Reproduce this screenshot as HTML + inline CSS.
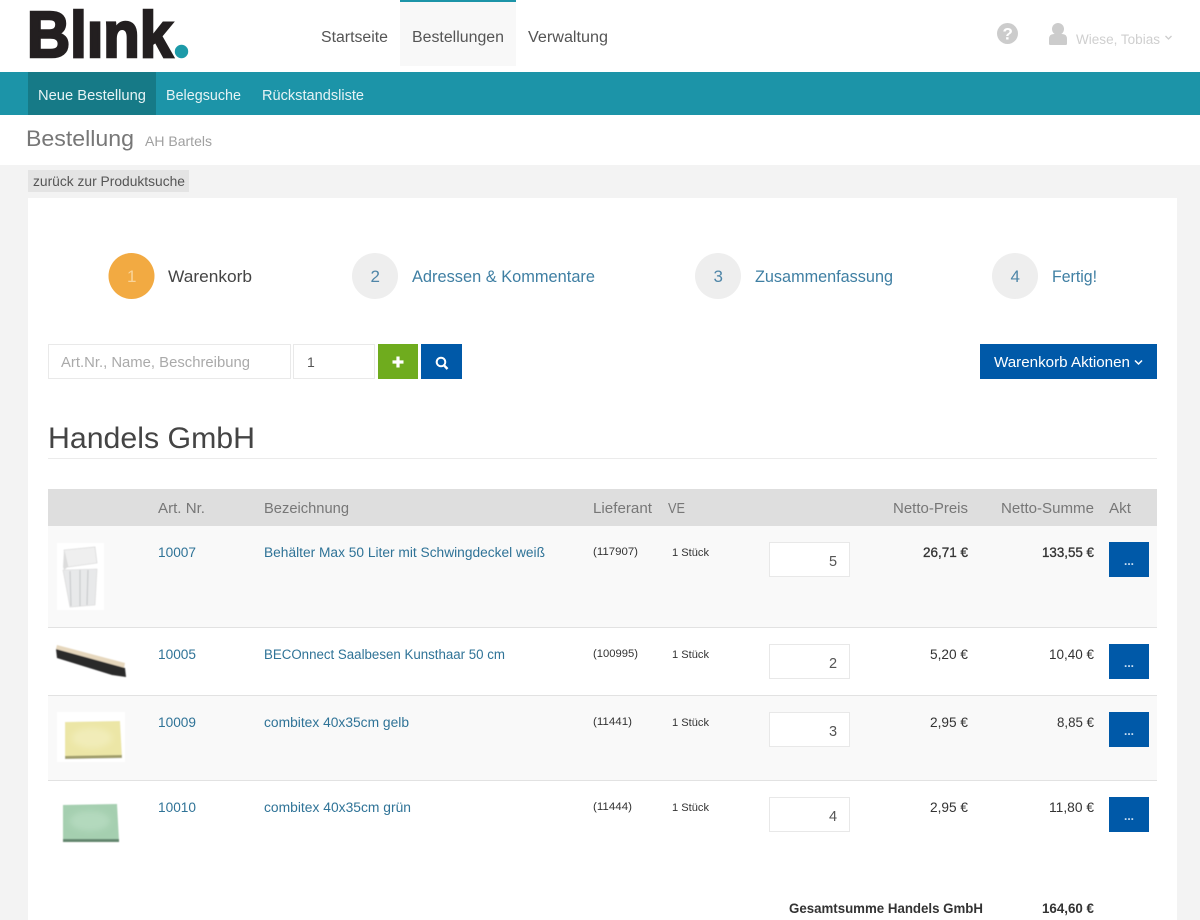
<!DOCTYPE html>
<html lang="de"><head><meta charset="utf-8"><title>Blink Bestellung</title>
<style>
html,body{margin:0;padding:0;background:#fff}
#p{position:relative;width:1200px;height:920px;overflow:hidden;background:#f3f3f3;font-family:"Liberation Sans",sans-serif}
#p div{position:absolute}
svg{position:absolute;left:0;top:0;filter:blur(.3px)}
text{font-family:"Liberation Sans",sans-serif}
</style></head><body>
<div id="p">
<div style="left:0;top:0;width:1200px;height:165px;background:#fff"></div>
<div style="left:400px;top:0;width:116px;height:66px;background:#f8f8f8;border-top:2px solid #1c94a8;box-sizing:border-box"></div>
<div style="left:0;top:72px;width:1200px;height:43px;background:#1c94a8"></div>
<div style="left:28px;top:72px;width:128px;height:43px;background:#167a87"></div>
<div style="left:28px;top:170px;width:161px;height:22px;background:#e4e4e4"></div>
<div style="left:28px;top:198px;width:1149px;height:722px;background:#fff"></div>
<div style="left:48px;top:344px;width:243px;height:35px;box-sizing:border-box;background:#fff;border:1px solid #e9e9e9"></div>
<div style="left:293px;top:344px;width:82px;height:35px;box-sizing:border-box;background:#fff;border:1px solid #e9e9e9"></div>
<div style="left:378px;top:344px;width:40px;height:35px;background:#6fac1e"></div>
<div style="left:421px;top:344px;width:41px;height:35px;background:#0059a8"></div>
<div style="left:980px;top:344px;width:177px;height:35px;background:#0059a8"></div>
<div style="left:48px;top:458px;width:1109px;height:1px;background:#ebebeb"></div>
<div style="left:48px;top:489px;width:1109px;height:37px;background:#dedede"></div>
<div style="left:48px;top:526px;width:1109px;height:102px;background:#f9f9f9;border-bottom:1px solid #e2e2e2;box-sizing:border-box"></div>
<div style="left:48px;top:628px;width:1109px;height:68px;background:#fff;border-bottom:1px solid #e2e2e2;box-sizing:border-box"></div>
<div style="left:48px;top:696px;width:1109px;height:85px;background:#f9f9f9;border-bottom:1px solid #e2e2e2;box-sizing:border-box"></div>
<div style="left:769px;top:542px;width:81px;height:35px;box-sizing:border-box;background:#fff;border:1px solid #e8e8e8"></div>
<div style="left:769px;top:644px;width:81px;height:35px;box-sizing:border-box;background:#fff;border:1px solid #e8e8e8"></div>
<div style="left:769px;top:712px;width:81px;height:35px;box-sizing:border-box;background:#fff;border:1px solid #e8e8e8"></div>
<div style="left:769px;top:797px;width:81px;height:35px;box-sizing:border-box;background:#fff;border:1px solid #e8e8e8"></div>
<div style="left:1109px;top:542px;width:40px;height:35px;background:#0059a8"></div>
<div style="left:1109px;top:644px;width:40px;height:35px;background:#0059a8"></div>
<div style="left:1109px;top:712px;width:40px;height:35px;background:#0059a8"></div>
<div style="left:1109px;top:797px;width:40px;height:35px;background:#0059a8"></div>

<svg width="1200" height="920" viewBox="0 0 1200 920">
<defs><filter id="b" x="-10%" y="-10%" width="120%" height="120%"><feGaussianBlur stdDeviation="0.6"/></filter>
<filter id="c" x="-30%" y="-30%" width="160%" height="160%"><feGaussianBlur stdDeviation="3"/></filter></defs>
<!-- logo -->
<text x="27" y="57" font-size="65" font-weight="700" fill="#231f20" stroke="#231f20" stroke-width="2.600" textLength="146" lengthAdjust="spacingAndGlyphs">Blınk</text>
<circle cx="181.500" cy="51.500" r="6.700" fill="#1c9aa8"/>
<!-- top right icons -->
<circle cx="1007.500" cy="33.500" r="10.500" fill="#ccc"/>
<text x="1002.500" y="39.500" font-size="17" font-weight="700" fill="#fff">?</text>
<circle cx="1058" cy="29" r="6" fill="#ccc"/>
<path d="M1049 44v-5q0-5 5-5h8q5 0 5 5v5q0 1-2 1h-14q-2 0-2-1z" fill="#ccc"/>
<path d="M1165.500 36l3 3 3-3" fill="none" stroke="#ccc" stroke-width="1.300"/>

<g font-size="15.500" fill="#555">
<text x="321" y="42" textLength="67" lengthAdjust="spacingAndGlyphs">Startseite</text>
<text x="412" y="42" textLength="92" lengthAdjust="spacingAndGlyphs">Bestellungen</text>
<text x="528" y="42" textLength="80" lengthAdjust="spacingAndGlyphs">Verwaltung</text>
</g>
<text x="1076" y="44" font-size="13.500" fill="#cfcfcf" textLength="84" lengthAdjust="spacingAndGlyphs">Wiese, Tobias</text>
<g font-size="14.500" fill="#e6f3f5">
<text x="38" y="100" textLength="108" lengthAdjust="spacingAndGlyphs">Neue Bestellung</text>
<text x="166" y="100" textLength="75" lengthAdjust="spacingAndGlyphs">Belegsuche</text>
<text x="262" y="100" textLength="102" lengthAdjust="spacingAndGlyphs">Rückstandsliste</text>
</g>
<text x="26" y="146" font-size="22.500" fill="#777" textLength="108" lengthAdjust="spacingAndGlyphs">Bestellung</text>
<text x="145" y="146" font-size="14" fill="#a0a0a0" textLength="67" lengthAdjust="spacingAndGlyphs">AH Bartels</text>
<text x="33" y="186" font-size="13.500" fill="#555" textLength="152" lengthAdjust="spacingAndGlyphs">zurück zur Produktsuche</text>

<!-- steps -->
<circle cx="131.500" cy="276" r="23" fill="#f2aa42"/>
<circle cx="375" cy="276" r="23" fill="#eeeeee"/>
<circle cx="718" cy="276" r="23" fill="#eeeeee"/>
<circle cx="1015" cy="276" r="23" fill="#eeeeee"/>
<text x="127" y="282" font-size="17" fill="#f9d49a">1</text>
<g font-size="17" fill="#4f86a8">
<text x="370.500" y="282">2</text>
<text x="713.500" y="282">3</text>
<text x="1010.500" y="282">4</text>
</g>
<text x="168" y="282" font-size="16.500" fill="#444" textLength="84" lengthAdjust="spacingAndGlyphs">Warenkorb</text>
<g font-size="16.500" fill="#3f7fa3">
<text x="412" y="282" textLength="183" lengthAdjust="spacingAndGlyphs">Adressen &amp; Kommentare</text>
<text x="755" y="282" textLength="138" lengthAdjust="spacingAndGlyphs">Zusammenfassung</text>
<text x="1052" y="282" textLength="45" lengthAdjust="spacingAndGlyphs">Fertig!</text>
</g>

<!-- search -->
<text x="61" y="367" font-size="15" fill="#aaa" textLength="189" lengthAdjust="spacingAndGlyphs">Art.Nr., Name, Beschreibung</text>
<text x="307" y="367" font-size="14" fill="#555">1</text>
<path d="M398 356.500v11M392.500 362h11" stroke="#fff" stroke-width="3.200"/>
<circle cx="441" cy="362" r="4.300" fill="none" stroke="#fff" stroke-width="2"/>
<path d="M444 365.300l3.500 3.700" stroke="#fff" stroke-width="2.400"/>
<text x="994" y="367" font-size="14.500" fill="#fff" textLength="136" lengthAdjust="spacingAndGlyphs">Warenkorb Aktionen</text>
<path d="M1135 360.500l3.500 3.500 3.500-3.500" fill="none" stroke="#fff" stroke-width="1.500"/>

<text x="48" y="448" font-size="30" fill="#444" textLength="207" lengthAdjust="spacingAndGlyphs">Handels GmbH</text>

<!-- table header -->
<g font-size="14.500" fill="#777">
<text x="158" y="513" textLength="47" lengthAdjust="spacingAndGlyphs">Art. Nr.</text>
<text x="264" y="513" textLength="85" lengthAdjust="spacingAndGlyphs">Bezeichnung</text>
<text x="593" y="513" textLength="59" lengthAdjust="spacingAndGlyphs">Lieferant</text>
<text x="668" y="513" textLength="17" lengthAdjust="spacingAndGlyphs">VE</text>
<text x="893" y="513" textLength="75" lengthAdjust="spacingAndGlyphs">Netto-Preis</text>
<text x="1001" y="513" textLength="93" lengthAdjust="spacingAndGlyphs">Netto-Summe</text>
<text x="1109" y="513" textLength="22" lengthAdjust="spacingAndGlyphs">Akt</text>
</g>

<!-- row text -->
<g font-size="13.500" fill="#2f7397">
<text x="158" y="557" textLength="38" lengthAdjust="spacingAndGlyphs">10007</text>
<text x="264" y="557" textLength="281" lengthAdjust="spacingAndGlyphs">Behälter Max 50 Liter mit Schwingdeckel weiß</text>
<text x="158" y="659" textLength="38" lengthAdjust="spacingAndGlyphs">10005</text>
<text x="264" y="659" textLength="241" lengthAdjust="spacingAndGlyphs">BECOnnect Saalbesen Kunsthaar 50 cm</text>
<text x="158" y="727" textLength="38" lengthAdjust="spacingAndGlyphs">10009</text>
<text x="264" y="727" textLength="145" lengthAdjust="spacingAndGlyphs">combitex 40x35cm gelb</text>
<text x="158" y="812" textLength="38" lengthAdjust="spacingAndGlyphs">10010</text>
<text x="264" y="812" textLength="147" lengthAdjust="spacingAndGlyphs">combitex 40x35cm grün</text>
</g>
<g font-size="11" fill="#333">
<text x="593" y="555" textLength="45" lengthAdjust="spacingAndGlyphs">(117907)</text>
<text x="672" y="556" textLength="37" lengthAdjust="spacingAndGlyphs">1 Stück</text>
<text x="593" y="657" textLength="45" lengthAdjust="spacingAndGlyphs">(100995)</text>
<text x="672" y="658" textLength="37" lengthAdjust="spacingAndGlyphs">1 Stück</text>
<text x="593" y="725" textLength="39" lengthAdjust="spacingAndGlyphs">(11441)</text>
<text x="672" y="726" textLength="37" lengthAdjust="spacingAndGlyphs">1 Stück</text>
<text x="593" y="810" textLength="39" lengthAdjust="spacingAndGlyphs">(11444)</text>
<text x="672" y="811" textLength="37" lengthAdjust="spacingAndGlyphs">1 Stück</text>
</g>
<g font-size="14.500" fill="#555">
<text x="829" y="566">5</text>
<text x="829" y="668">2</text>
<text x="829" y="736">3</text>
<text x="829" y="821">4</text>
</g>
<g font-size="13.500" fill="#333">
<text x="923" y="557" textLength="45" lengthAdjust="spacingAndGlyphs" stroke="#333" stroke-width="0.300">26,71 €</text>
<text x="1042" y="557" textLength="52" lengthAdjust="spacingAndGlyphs" stroke="#333" stroke-width="0.300">133,55 €</text>
<text x="930" y="659" textLength="38" lengthAdjust="spacingAndGlyphs">5,20 €</text>
<text x="1049" y="659" textLength="45" lengthAdjust="spacingAndGlyphs">10,40 €</text>
<text x="930" y="727" textLength="38" lengthAdjust="spacingAndGlyphs">2,95 €</text>
<text x="1057" y="727" textLength="37" lengthAdjust="spacingAndGlyphs">8,85 €</text>
<text x="930" y="812" textLength="38" lengthAdjust="spacingAndGlyphs">2,95 €</text>
<text x="1049" y="812" textLength="45" lengthAdjust="spacingAndGlyphs">11,80 €</text>
<text x="789" y="913" font-weight="700" textLength="194" lengthAdjust="spacingAndGlyphs">Gesamtsumme Handels GmbH</text>
<text x="1042" y="913" font-weight="700" textLength="52" lengthAdjust="spacingAndGlyphs">164,60 €</text>
</g>
<g font-size="12" font-weight="700" fill="#c9def2">
<text x="1124" y="565">...</text>
<text x="1124" y="667">...</text>
<text x="1124" y="735">...</text>
<text x="1124" y="820">...</text>
</g>

<!-- product images -->
<g filter="url(#b)">
<rect x="57" y="543" width="47" height="67" fill="#fff"/>
<path d="M64 550l31-3 2 16-29 4z" fill="#efefef" stroke="#d2d2d2" stroke-width=".6"/>
<path d="M64 550l4 17-4 3-1-3z" fill="#dcdcdc"/>
<path d="M63 570l34-1-2 36-25 2z" fill="#e8e9ea" stroke="#d5d5d5" stroke-width=".6"/>
<path d="M70 571l1 35M80 570l0 36M88 570l-1 35" stroke="#c9cbcd" stroke-width="1.200"/>

<path d="M57 645l68 18-1 5-68-19z" fill="#e6d7bd"/>
<path d="M56 649l69 19 1 9-14-2-55-17z" fill="#2a292c"/>

<rect x="57" y="712" width="68" height="50" fill="#fff"/>
<path d="M65 722l55-1 2 36-57 1z" fill="#ece6a6"/>
<path d="M65 756l57-1 0 3-57 1z" fill="#a09e6c"/>
<ellipse cx="92" cy="738" rx="20" ry="10" fill="#f1ecb8" filter="url(#c)"/>

<path d="M63 805l54-1 2 37-56 0z" fill="#a5cfb0"/>
<path d="M63 839l56 0 0 3-56 0z" fill="#64866e"/>
<ellipse cx="90" cy="821" rx="20" ry="10" fill="#b3d9bd" filter="url(#c)"/>
</g>
</svg>
</div>
</body></html>
